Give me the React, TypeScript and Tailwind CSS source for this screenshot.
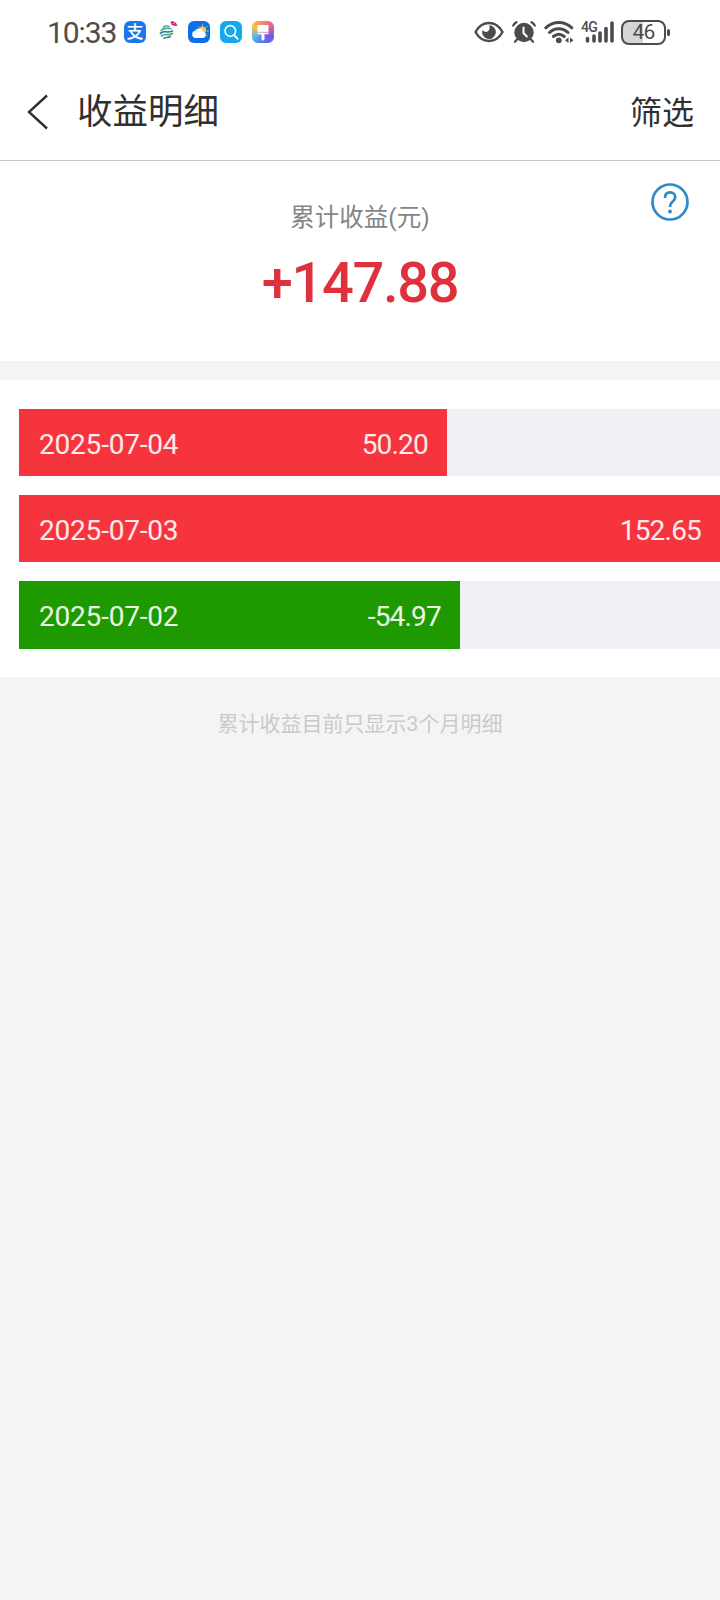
import React from "react";

const records = [
  { date: "2025-07-04", amount: "50.20", width: 428, bar: "bg-[#f6343e]", height: "h-[67px]" },
  { date: "2025-07-03", amount: "152.65", width: 701, bar: "bg-[#f6343e]", height: "h-[67px]" },
  { date: "2025-07-02", amount: "-54.97", width: 441, bar: "bg-[#1e9a00]", height: "h-[68px]" },
];

const StatusBar = () => {
  return (
    <div className="flex h-16 items-center justify-between pl-[47px] pr-[50px]">
      <div className="flex items-center">
        <span className="w-[77px] pt-px text-[30px] leading-none tracking-[-1.1px] text-[#4c4c4c]">
          10:33
        </span>
        <div className="flex items-center">
          {/* Alipay */}
          <div className="flex size-[22px] items-center justify-center rounded-[6px] bg-[#1b78ea] text-[17px] font-medium leading-none text-white">
            支
          </div>
          {/* Carrier */}
          <svg className="ml-[13px] mr-[10px]" width="19" height="22" viewBox="0 0 19 22" fill="none">
            <g strokeWidth="1.7" strokeLinecap="round">
              <path d="M4.500 6c2-1.300 3.500-1.300 5.500-.5" stroke="#4f9cc8" />
              <path d="M2 9.500c3.500-3.500 5.500-1.500 10-2" stroke="#55ad82" />
              <path d="M1.300 12.500c5-4.500 5.500.5 12.200-2.500" stroke="#347fb4" />
              <path d="M2.500 15c4-3.500 5.500.5 11-2.500" stroke="#55ad5c" />
              <path d="M5 17.300c2.500-1.500 3.500 0 6.500-2" stroke="#4387a8" />
            </g>
            <path d="M11.500.3l3 .2 2.500 1.500 1.500 3-3.500-.2-2.500-1z" fill="#c51b76" />
            <path d="M13.500 2.300l2.500.8" stroke="#f3bad7" strokeWidth=".8" />
          </svg>
          {/* Weather */}
          <svg width="22" height="22" viewBox="0 0 22 22">
            <rect width="22" height="22" rx="6" fill="#0b70ea" />
            <path d="M14.500 3.500v2M9.800 5.200l1.400 1.400M19.300 5.200l-1.400 1.400M18.500 10h2M18 13.500l1.300 1.300" stroke="#ffc94b" strokeWidth="1" />
            <circle cx="14.500" cy="9" r="3.600" fill="#ffc94b" />
            <path d="M7.500 17a3.700 3.700 0 01-.4-7.300 4.500 4.500 0 018.200 1A3.200 3.200 0 0115.200 17z" fill="#fff" />
          </svg>
          {/* Search */}
          <svg className="ml-[10px]" width="22" height="22" viewBox="0 0 22 22" fill="none">
            <rect width="22" height="22" rx="6" fill="#12a9ee" />
            <circle cx="10.300" cy="10" r="5.300" stroke="#fff" strokeWidth="1.700" />
            <path d="M14 14l3.500 3.700" stroke="#fff" strokeWidth="1.900" strokeLinecap="round" />
          </svg>
          {/* Themes */}
          <div className="ml-[10px] flex size-[22px] items-center justify-center rounded-[6px] bg-[conic-gradient(from_0deg,#f08b63,#df5e9c,#735be5,#5572f5,#54b7ee,#ffbd48,#f08b63)]">
            <svg width="22" height="22" viewBox="0 0 22 22">
              <path d="M5.500 4h11v7h-11z" fill="#fff" />
              <path d="M5.500 11.500h11v1.700h-4V18a1.500 1.500 0 01-3 0v-4.800h-4z" fill="#fff" />
              <path d="M5.500 11.300h11" stroke="#e69eb5" strokeWidth=".8" />
            </svg>
          </div>
        </div>
      </div>

      <div className="flex items-center">
        {/* Eye */}
        <svg width="30" height="22" viewBox="0 0 30 22" fill="none">
          <path d="M1.500 11C8-1 22-1 28.500 11 22 23 8 23 1.500 11z" stroke="#4c4c4c" strokeWidth="2.400" />
          <path d="M15 4.200a6.900 6.900 0 11-6.600 4.800c2.200 2.600 5 2.300 6.300.6 1.200-1.700 1.200-3.600.3-5.400z" fill="#4c4c4c" />
        </svg>
        {/* Alarm */}
        <svg className="ml-2" width="24" height="22" viewBox="0 0 24 22" fill="none">
          <circle cx="12" cy="11.500" r="9.700" fill="#4c4c4c" />
          <path d="M11.500 6.500v5.500l3.300 3.500" stroke="#fff" strokeWidth="2" strokeLinecap="round" />
          <path d="M1.200 4.500c.8-1.500 1.800-2.500 3.300-3.300M22.800 4.500c-.8-1.500-1.800-2.500-3.300-3.300M5 18.500l-2 2.300M19 18.500l2 2.300" stroke="#4c4c4c" strokeWidth="2.200" strokeLinecap="round" />
        </svg>
        {/* Wifi */}
        <svg className="ml-2" width="30" height="24" viewBox="0 0 30 24" fill="none">
          <path d="M1.800 7.800c7.500-7 18.500-7 26 0M5.500 12.500c5.500-5 13-5 18.500 0M9.500 16.500c3.500-3 7.200-3 10.700 0" stroke="#4c4c4c" strokeWidth="3" strokeLinecap="round" />
          <circle cx="14.800" cy="20.300" r="2.900" fill="#4c4c4c" />
          <path d="M24.500 17.500v5.500l-3.500-2.700zM26 17.500v5.500l3.500-2.700z" fill="#4c4c4c" />
        </svg>
        {/* Signal */}
        <svg className="ml-[7px]" width="34" height="24" viewBox="0 0 34 24">
          <text x="0" y="11.500" fontSize="14" fontWeight="500" letterSpacing="-.8" fill="#4c4c4c">4G</text>
          <path d="M6.500 18.500v2.500M13 16v5M19 13v8M25 8.500v12.500M31 3v18" stroke="#4c4c4c" strokeWidth="3.600" strokeLinecap="round" />
        </svg>
        {/* Battery */}
        <div className="ml-[6px] flex h-[25px] w-[45px] items-center justify-center rounded-[8px] border-2 border-[#4c4c4c] bg-linear-to-r from-[#d5d5d5] from-48% to-white to-48% pt-px text-[21px] leading-none tracking-[-0.8px] text-[#4c4c4c]">
          46
        </div>
        <div className="ml-px h-[7px] w-[3px] rounded-full bg-[#4c4c4c]" />
      </div>
    </div>
  );
};

const Header = () => {
  return (
    <div className="flex h-[97px] items-center justify-between border-b border-[#c8c8c8] pl-[27px] pr-[26px] text-[#303030]">
      <div className="flex items-center">
        <svg width="22" height="36" viewBox="0 0 22 36" fill="none">
          <path d="M20 1.500L2 18l18 16.500" stroke="#303030" strokeWidth="2.400" />
        </svg>
        <h1 className="ml-7 pt-[2px] text-[35.500px] leading-none">收益明细</h1>
      </div>
      <button className="pt-[2px] text-[32px] leading-none">筛选</button>
    </div>
  );
};

const Summary = () => {
  return (
    <div className="relative flex h-[200px] flex-col items-center bg-white pt-[45px]">
      <span className="text-[24.500px] leading-6 text-[#858585]">累计收益(元)</span>
      <span className="mt-[23px] text-[56px] font-medium leading-[60px] tracking-[-1.3px] text-[#df303e]">
        +147.88
      </span>
      {/* Help */}
      <svg className="absolute right-[31px] top-[22px]" width="38" height="38" viewBox="0 0 38 38" fill="none">
        <circle cx="19" cy="19" r="17.500" stroke="#2f88c8" strokeWidth="2.700" />
        <path d="M14 15c0-3.800 2.200-5.600 5.100-5.600s5.100 2 5.100 4.800c0 4.200-5.100 4.300-5.100 8.800v1" stroke="#2f88c8" strokeWidth="2.700" />
        <circle cx="19" cy="28.500" r="1.900" fill="#2f88c8" />
      </svg>
    </div>
  );
};

const App = () => {
  return (
    <div className="min-h-screen bg-[#f4f4f4] font-[Roboto,'Noto_Sans_CJK_SC',sans-serif]">
      <div className="bg-white">
        <StatusBar />
        <Header />
      </div>
      <Summary />

      {/* Records */}
      <div className="mt-[19px] flex flex-col gap-[19px] bg-white pb-7 pl-[19px] pt-[29px]">
        {records.map((item) => (
          <div key={item.date} className={`${item.height} bg-[#f0f0f5]`}>
            <div
              className={`${item.bar} flex h-full items-center justify-between pl-5 pr-[19px] pt-1 text-[28px] leading-none text-white/90`}
              style={{ width: item.width }}
            >
              <span className="tracking-[-0.2px]">{item.date}</span>
              <span className="tracking-[-0.8px]">{item.amount}</span>
            </div>
          </div>
        ))}
      </div>

      <p className="pt-[35px] text-center text-[21px] leading-6 text-[#cacaca]">
        累计收益目前只显示3个月明细
      </p>
    </div>
  );
};

export default App;
